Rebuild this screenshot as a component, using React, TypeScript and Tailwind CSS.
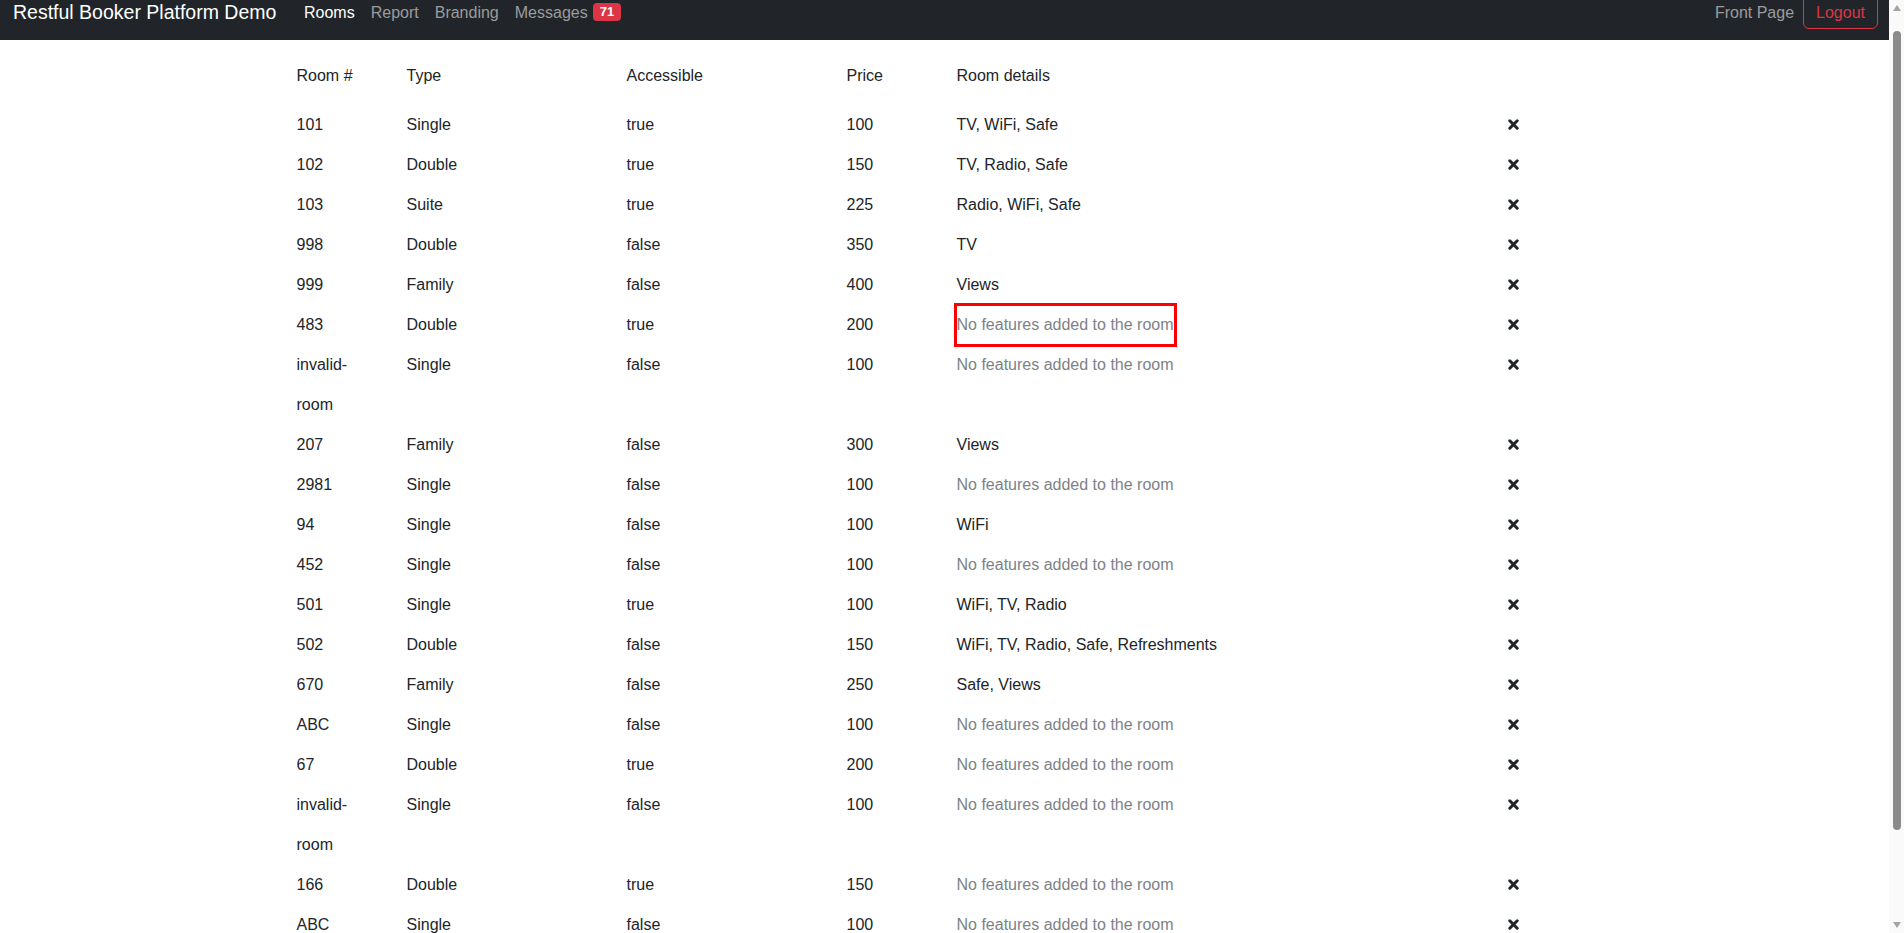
import React from "react";

type Room = { num: string; type: string; acc: string; price: string; details: string | null; box?: boolean };

const rooms: Room[] = [
  { num: "101", type: "Single", acc: "true", price: "100", details: "TV, WiFi, Safe" },
  { num: "102", type: "Double", acc: "true", price: "150", details: "TV, Radio, Safe" },
  { num: "103", type: "Suite", acc: "true", price: "225", details: "Radio, WiFi, Safe" },
  { num: "998", type: "Double", acc: "false", price: "350", details: "TV" },
  { num: "999", type: "Family", acc: "false", price: "400", details: "Views" },
  { num: "483", type: "Double", acc: "true", price: "200", details: null, box: true },
  { num: "invalid-room", type: "Single", acc: "false", price: "100", details: null },
  { num: "207", type: "Family", acc: "false", price: "300", details: "Views" },
  { num: "2981", type: "Single", acc: "false", price: "100", details: null },
  { num: "94", type: "Single", acc: "false", price: "100", details: "WiFi" },
  { num: "452", type: "Single", acc: "false", price: "100", details: null },
  { num: "501", type: "Single", acc: "true", price: "100", details: "WiFi, TV, Radio" },
  { num: "502", type: "Double", acc: "false", price: "150", details: "WiFi, TV, Radio, Safe, Refreshments" },
  { num: "670", type: "Family", acc: "false", price: "250", details: "Safe, Views" },
  { num: "ABC", type: "Single", acc: "false", price: "100", details: null },
  { num: "67", type: "Double", acc: "true", price: "200", details: null },
  { num: "invalid-room", type: "Single", acc: "false", price: "100", details: null },
  { num: "166", type: "Double", acc: "true", price: "150", details: null },
  { num: "ABC", type: "Single", acc: "false", price: "100", details: null },
];

function XIcon() {
  return (
    <svg width="11" height="11" viewBox="0 0 11 11" className="block">
      <path d="M1.8 1.8 L9.2 9.2 M9.2 1.8 L1.8 9.2" stroke="#212529" strokeWidth="3" strokeLinecap="round" fill="none" />
    </svg>
  );
}

function Row({ r }: { r: Room }) {
  return (
    <div className="grid grid-cols-12 leading-[40px]">
      <div className="col-span-1 px-[12px]">{r.num}</div>
      <div className="col-span-2 px-[12px]">{r.type}</div>
      <div className="col-span-2 px-[12px]">{r.acc}</div>
      <div className="col-span-1 px-[12px]">{r.price}</div>
      <div className="col-span-5 px-[12px]">
        {r.details ? (
          <span>{r.details}</span>
        ) : (
          <span className="relative inline-block text-[#7d8287]">
            No features added to the room
            {r.box && (
              <span className="absolute left-[-3px] right-[-3px] top-[-2px] bottom-[-2px] border-[3px] border-[#ff0000]" />
            )}
          </span>
        )}
      </div>
      <div className="col-span-1 px-[13px] flex items-start pt-[14px]">
        <XIcon />
      </div>
    </div>
  );
}

export default function App() {
  return (
    <div
      className="flex h-[933px] w-[1904px] overflow-hidden bg-white text-[16px] text-[#212529]"
      style={{ fontFamily: '"Liberation Sans", Arial, sans-serif' }}
    >
      <div className="flex-1 flex flex-col min-w-0">
        <nav className="h-[40px] bg-[#212529] flex items-start shrink-0">
          <div className="w-[304px] pl-[13px] text-[19.5px] leading-[24px] text-white whitespace-nowrap">
            Restful Booker Platform Demo
          </div>
          <div className="flex items-start gap-[16px] text-[16px] leading-[24px] mt-[1px]">
            <span className="text-white">Rooms</span>
            <span className="text-[#9a9c9e]">Report</span>
            <span className="text-[#9a9c9e]">Branding</span>
            <span className="flex items-start text-[#9a9c9e]">
              Messages
              <span className="ml-[5px] mt-[2px] h-[18px] px-[7px] rounded-[4px] bg-[#dc3545] text-white text-[13px] font-bold leading-[18px]">
                71
              </span>
            </span>
          </div>
          <div className="ml-auto flex items-start pr-[11px]">
            <span className="text-[#9a9c9e] leading-[24px] mt-[1px] mr-[9px]">Front Page</span>
            <span className="mt-[-7px] border border-[#dc3545] rounded-[6px] px-[12px] pt-[8px] pb-[4px] leading-[22px] text-[#dc3545]">
              Logout
            </span>
          </div>
        </nav>
        <div className="w-[1320px] mx-auto pt-[16px]">
          <div className="grid grid-cols-12 leading-[40px] mb-[9px]">
            <div className="col-span-1 px-[12px]">Room #</div>
            <div className="col-span-2 px-[12px]">Type</div>
            <div className="col-span-2 px-[12px]">Accessible</div>
            <div className="col-span-1 px-[12px]">Price</div>
            <div className="col-span-5 px-[12px]">Room details</div>
            <div className="col-span-1 px-[12px]"></div>
          </div>
          {rooms.map((r, i) => (
            <Row key={i} r={r} />
          ))}
        </div>
      </div>
      <div className="w-[15px] shrink-0 bg-[#fafafa] flex flex-col items-center">
        <svg width="8" height="6" viewBox="0 0 8 6" className="mt-[5px]">
          <path d="M4 0 L8 6 L0 6 Z" fill="#a3a3a3" />
        </svg>
        <div className="mt-[20px] w-[8px] h-[799px] rounded-full bg-[#8b8b8b]" />
        <svg width="8" height="6" viewBox="0 0 8 6" className="mt-auto mb-[5px]">
          <path d="M0 0 L8 0 L4 6 Z" fill="#a3a3a3" />
        </svg>
      </div>
    </div>
  );
}
